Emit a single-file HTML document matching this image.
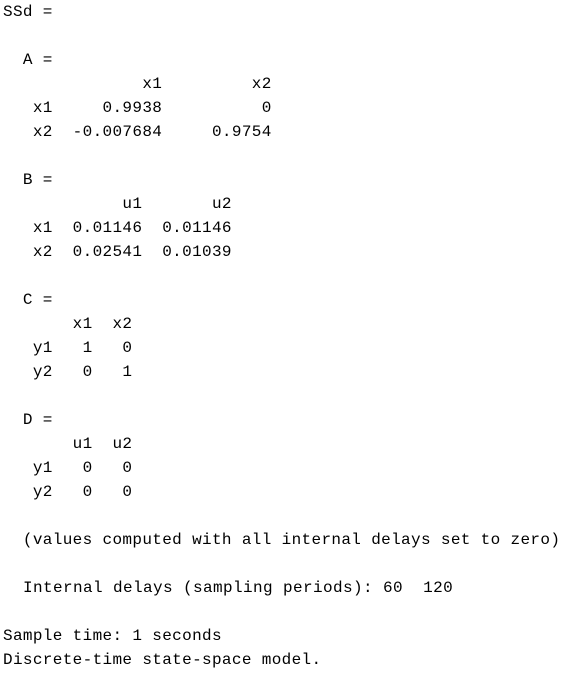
<!DOCTYPE html>
<html><head><meta charset="utf-8"><style>
html,body{margin:0;padding:0;background:#fff;width:580px;height:675px;overflow:hidden}
pre{margin:0;padding:0 0 0 3px;font-family:"Liberation Mono","Courier New",monospace;font-size:16px;line-height:24px;color:#000;letter-spacing:0.35px}
</style></head><body><pre>SSd =

  A =
              x1         x2
   x1     0.9938          0
   x2  -0.007684     0.9754

  B =
            u1       u2
   x1  0.01146  0.01146
   x2  0.02541  0.01039

  C =
       x1  x2
   y1   1   0
   y2   0   1

  D =
       u1  u2
   y1   0   0
   y2   0   0

  (values computed with all internal delays set to zero)

<span style="letter-spacing:0.4px">  Internal delays (sampling periods): 60  120</span>

Sample time: 1 seconds
Discrete-time state-space model.</pre></body></html>
